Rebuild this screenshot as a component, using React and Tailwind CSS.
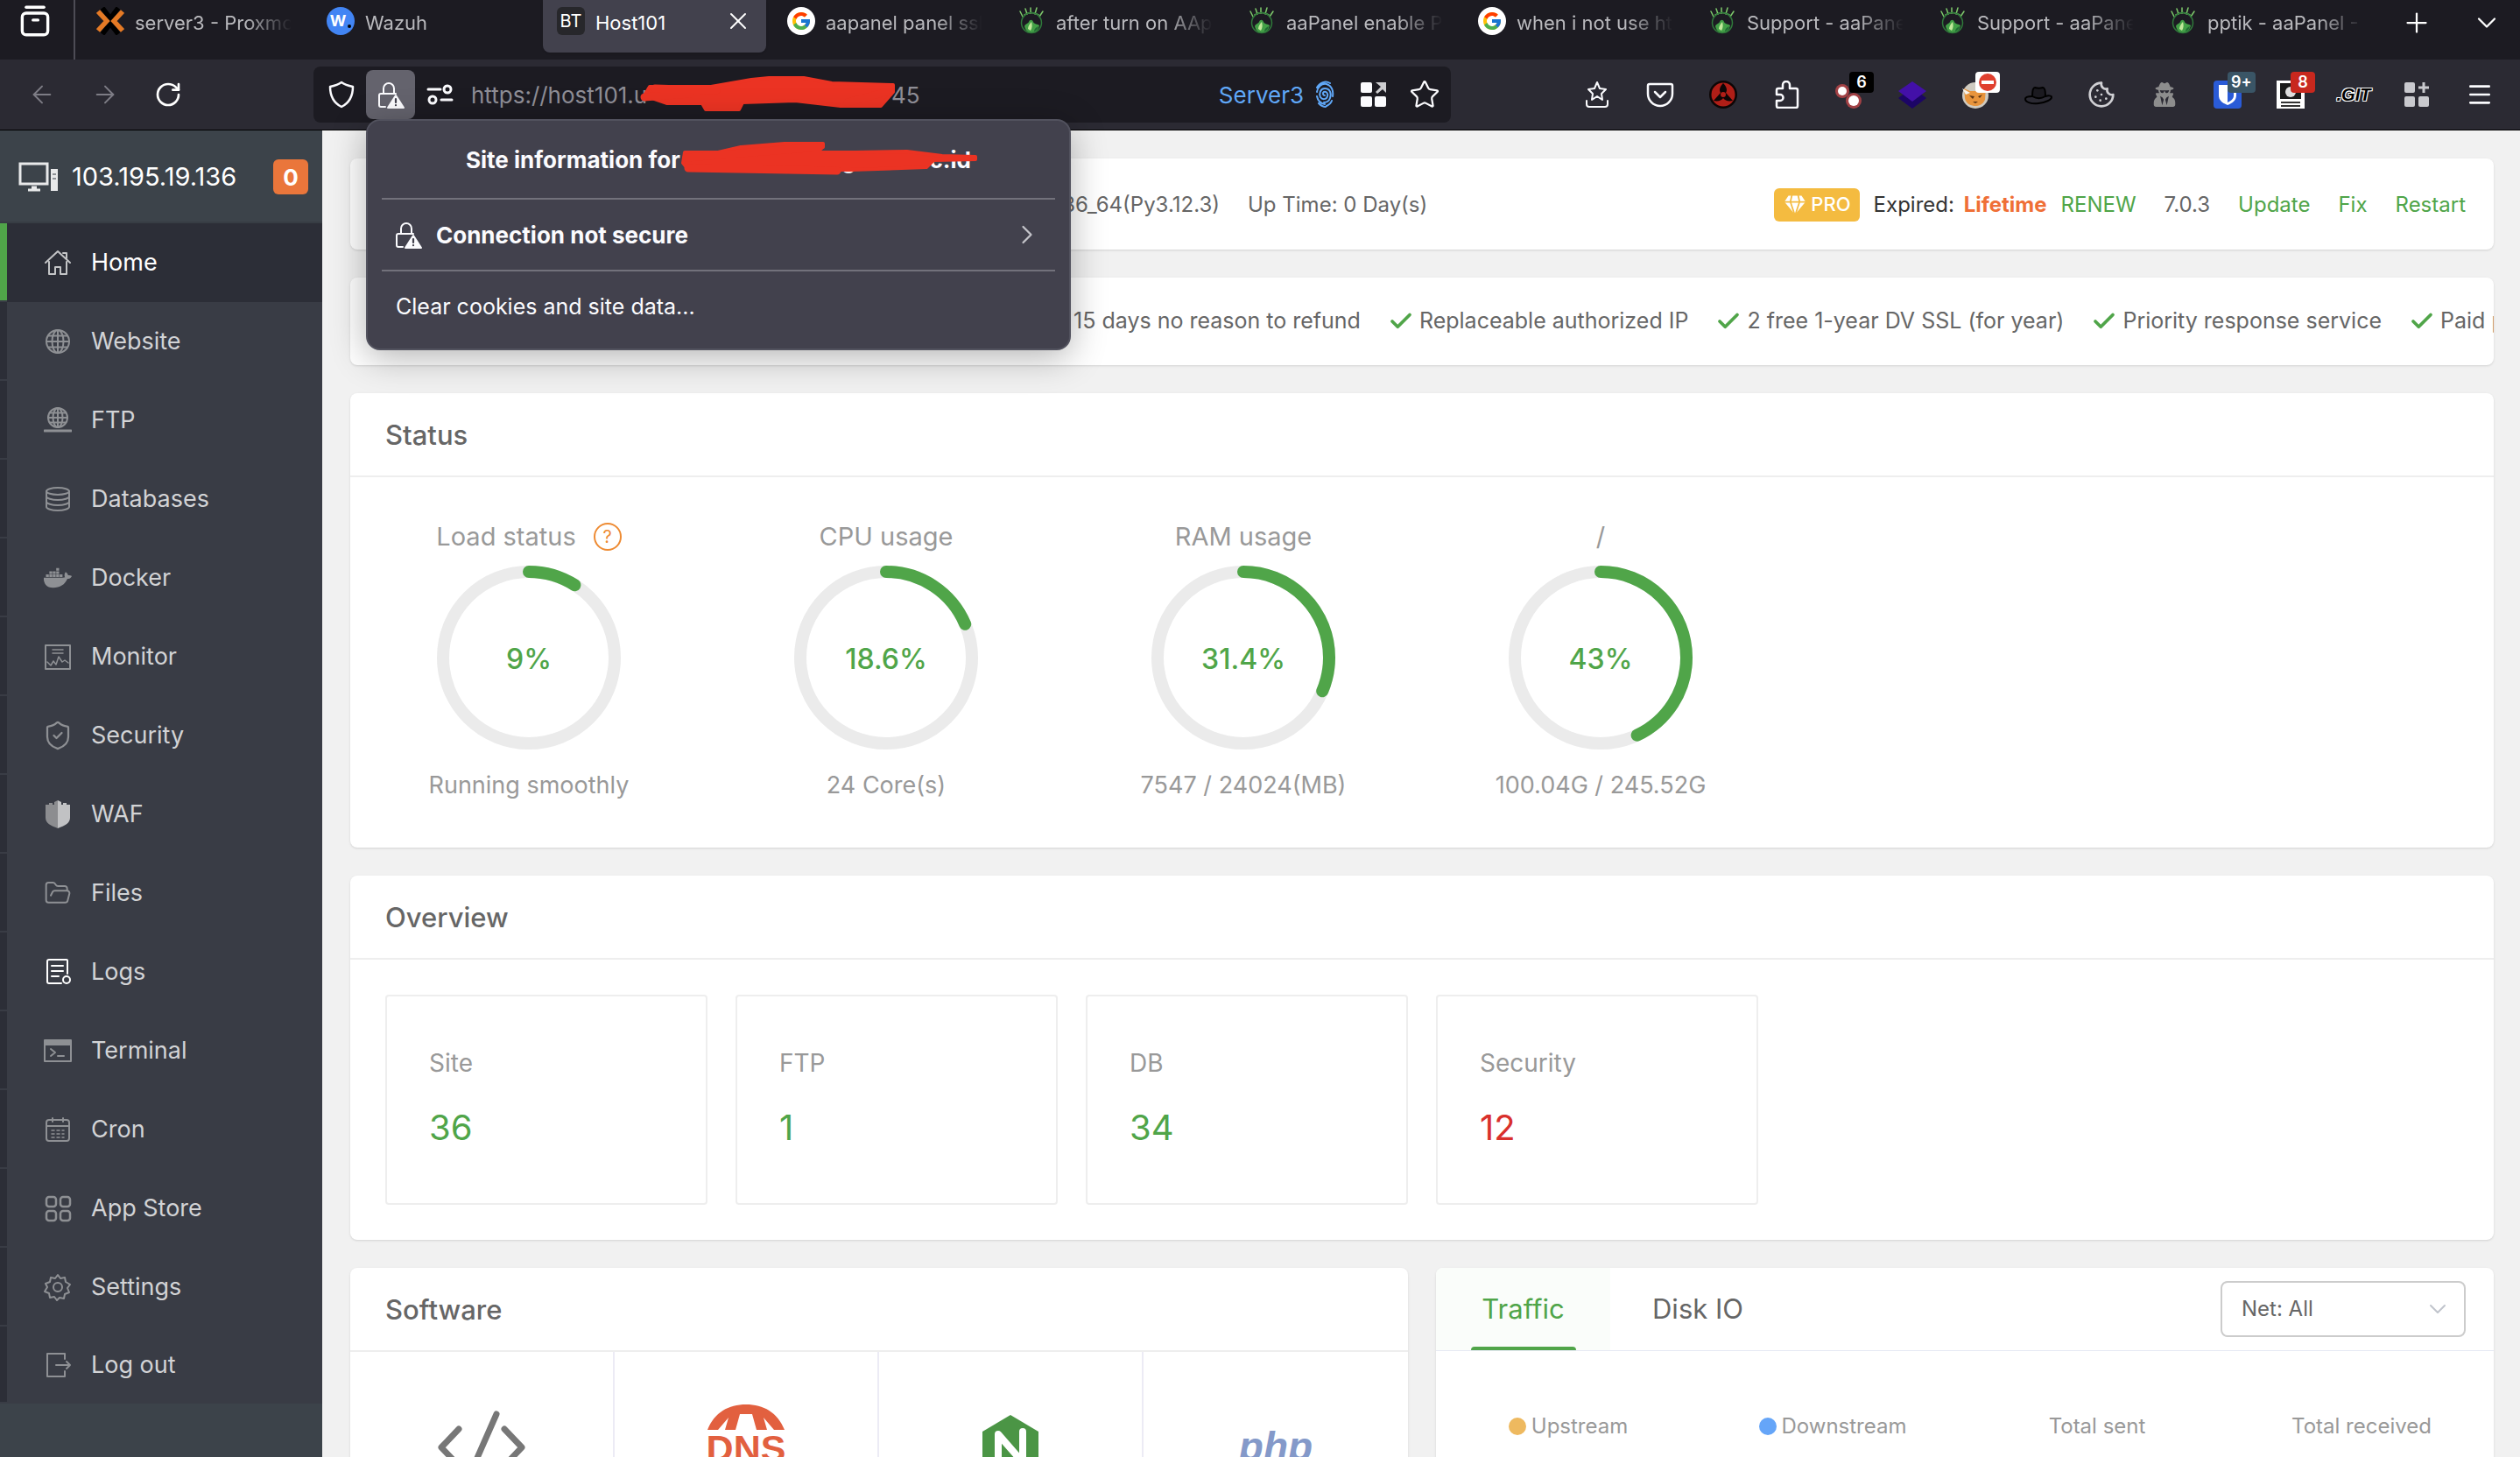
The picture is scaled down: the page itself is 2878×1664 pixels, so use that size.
import { FaDocker, FaUserSecret } from 'react-icons/fa';
import { FcGoogle } from 'react-icons/fc';
import {
  ArrowLeft,
  ArrowRight,
  Check,
  ChevronDown,
  ChevronRight,
  Cookie,
  FolderOpen,
  Menu,
  Plus,
  RotateCw,
  ShieldCheck,
  Star,
  X,
} from 'lucide-react';

/* ---------- small drawings ---------- */

function Svg({ className = 'size-8', width = 2, children, ...rest }) {
  return (
    <svg
      viewBox="0 0 32 32"
      className={`shrink-0 ${className}`}
      fill="none"
      stroke="currentColor"
      strokeWidth={width}
      strokeLinecap="round"
      strokeLinejoin="round"
      aria-hidden="true"
      {...rest}
    >
      {children}
    </svg>
  );
}

function ProxmoxLogo() {
  return (
    <Svg width={5.5} strokeLinecap="butt" strokeLinejoin="miter">
      <path d="M7 1 16 13 25 1M7 31 16 19 25 31" stroke="#000" />
      <path d="M2 5 12 16 2 27M30 5 20 16 30 27" stroke="#e57a25" />
    </Svg>
  );
}

function WazuhLogo() {
  return (
    <span className="flex size-8 shrink-0 items-center justify-center gap-0.5 rounded-full bg-[#4285f4] text-lg font-bold text-white">
      W
      <span className="mt-3 size-1 rounded-full bg-black" />
    </span>
  );
}

function BtLogo() {
  return (
    <span className="flex size-8 shrink-0 items-center justify-center rounded-md bg-[#27272b] text-xl text-white">
      BT
    </span>
  );
}

function GoogleLogo() {
  return (
    <span className="flex size-8 shrink-0 items-center justify-center rounded-full bg-white">
      <FcGoogle className="size-6" />
    </span>
  );
}

function PanelLogo() {
  return (
    <Svg width={1.5}>
      <path d="M6 11 3 5M11 8 9 2M15 7V1M20 8 22 1M25 11 29 5" stroke="#7fca6c" />
      <path d="M8 9c5-3 11-3 16 0" stroke="#7fca6c" />
      <circle cx="16" cy="18" r="11.500" stroke="#2f7a3b" />
      <path d="M8 22c1-3 4-3 5-5 1-3 4-3 5 0 1 3 5 2 7 4-1 5-4 8-9 8s-7-3-8-7z" fill="#43a047" stroke="none" />
      <path d="M12 25c0-3 2-6 4-8 1 3 1 7-1 10z" fill="#c1e89a" stroke="none" />
      <path d="M19 27c1-3 3-4 5-5-1 3-2 5-5 6z" fill="#1f6b32" stroke="none" />
    </Svg>
  );
}

function RecentIcon() {
  return (
    <Svg width={3} className="size-9">
      <path d="M7 2h18" />
      <rect x="3" y="8" width="26" height="22" rx="4" />
      <path d="M14 15h5" />
    </Svg>
  );
}

function LockWarning() {
  return (
    <Svg>
      <path d="M8 15V9a6 6 0 0 1 12 0v6M10 30H5a2 2 0 0 1-2-2V17a2 2 0 0 1 2-2h17" />
      <path d="M22 17 13 31h18z" fill="currentColor" />
      <path d="M22 21v4M22 28v.2" stroke="#42414d" strokeWidth="2.2" />
    </Svg>
  );
}

function Permissions() {
  return (
    <Svg width={3}>
      <path d="M3 10h14M18 22h12" />
      <circle cx="25" cy="10" r="4" />
      <circle cx="8" cy="22" r="4" />
    </Svg>
  );
}

function Swirl() {
  return (
    <Svg className="h-8 w-6 text-[#60a8f8]" viewBox="0 0 24 32">
      <path d="M12 17c-2 0-3-3-1-4 3-1 5 2 4 5-1 4-6 4-8 1-2-4 0-10 5-10 6 0 8 6 6 11-1 3-4 5-7 5" />
      <path d="M3 13C4 7 8 3 14 4c6 2 8 8 7 14M3 8C6 2 13 0 18 3M3 18c1 5 4 8 9 9M20 23c-1 3-4 5-6 6M5 26c3 3 5 4 8 4" />
    </Svg>
  );
}

function OpenTiles() {
  return (
    <Svg fill="currentColor" stroke="none">
      <rect x="1" y="2" width="13" height="12" rx="2" />
      <rect x="1" y="18" width="13" height="12" rx="2" />
      <rect x="17" y="18" width="13" height="12" rx="2" />
      <path d="M18 2h12v12l-4-4-6 5-2-2 6-6z" opacity=".8" />
    </Svg>
  );
}

/* ---------- browser chrome ---------- */

const tabs = [
  { title: 'server3 - Proxmox Virtual', Logo: ProxmoxLogo },
  { title: 'Wazuh', Logo: WazuhLogo },
  { title: 'Host101', Logo: BtLogo, active: true },
  { title: 'aapanel panel ssl not', Logo: GoogleLogo },
  { title: 'after turn on AApanel', Logo: PanelLogo },
  { title: 'aaPanel enable Panel', Logo: PanelLogo },
  { title: 'when i not use https', Logo: GoogleLogo },
  { title: 'Support - aaPanel - ', Logo: PanelLogo },
  { title: 'Support - aaPanel - ', Logo: PanelLogo },
  { title: 'pptik - aaPanel - Ho', Logo: PanelLogo },
];

function TabBar() {
  return (
    <div className="flex h-[68px] bg-[#1c1b22] text-[22px]">
      <button aria-label="Recent tabs" className="flex w-[86px] shrink-0 items-start justify-center border-r-2 border-[#4d4c55] pt-1.5 pr-1 text-white">
        <RecentIcon />
      </button>
      <div className="ml-2 flex min-w-0 flex-1 gap-2" role="tablist">
        {tabs.map(({ title, Logo, active }, i) => (
          <div
            key={i}
            className={`flex h-[60px] w-[255px] shrink-0 items-start gap-3 rounded-b-lg px-4 pt-2
              ${active ? 'bg-[#42414d] text-white shadow' : 'text-[#b9b9bd]'}`}
          >
            <Logo />
            <button
              role="tab"
              aria-selected={!!active}
              className={`min-w-0 flex-1 overflow-hidden text-left leading-9 whitespace-nowrap
                ${active ? '' : '[mask-image:linear-gradient(to_right,black_70%,transparent)]'}`}
            >
              {title}
            </button>
            {active && (
              <button aria-label="Close tab">
                <X className="size-8" strokeWidth={1.5} />
              </button>
            )}
          </div>
        ))}
      </div>
      <div className="flex h-[52px] shrink-0 items-center gap-11 pr-5 text-white">
        <button aria-label="New tab">
          <Plus className="size-9" strokeWidth={1.5} />
        </button>
        <button aria-label="List all tabs">
          <ChevronDown className="size-9" strokeWidth={1.5} />
        </button>
      </div>
    </div>
  );
}

function Scribble({ className, viewBox, d, thin }) {
  return (
    <svg viewBox={viewBox} className={`absolute ${className}`} fill="#eb3323" stroke="#eb3323" strokeWidth="4" strokeLinejoin="round" aria-hidden="true">
      <path d={d} />
      <path d={thin} fill="none" strokeWidth="9" strokeLinecap="round" />
    </svg>
  );
}

function SiteInfo() {
  return (
    <div className="absolute top-full left-0 z-20 w-[805px] rounded-2xl border-2 border-[#52525e] bg-[#42414d] px-4 text-[26px] text-[#fbfbfe] shadow-[0_8px_40px_rgba(0,0,0,0.3)]">
      <div className="relative flex h-[90px] items-center justify-center border-b-2 border-[#72717b] font-bold">
        <span>Site information for h</span>
        <span className="w-[162px]" />
        <span>g</span>
        <span className="w-[84px]" />
        <span>c.id</span>
        <Scribble
          className="top-6 left-[340px] h-12 w-[350px]"
          viewBox="0 0 350 48"
          d="M6 12 44 12 70 6 120 2 164 2 164 6 140 12 200 12 260 11 300 16 338 17 338 20 290 21 282 29 196 32 130 32 80 29 8 29 4 24z"
          thin="M8 18 160 6M10 30 180 33"
        />
      </div>
      <button className="flex h-[82px] w-full items-center gap-4 border-b-2 border-[#72717b] pr-3.5 pl-3.5 text-left font-bold">
        <LockWarning />
        <span className="flex-1">Connection not secure</span>
        <ChevronRight className="size-9 text-[#c4c4ca]" strokeWidth={1.5} />
      </button>
      <button className="flex h-[88px] w-full items-center pb-1.5 pl-4 text-left text-[25px]">
        Clear cookies and site data...
      </button>
    </div>
  );
}

function Badge({ className, children }) {
  return (
    <span className={`absolute -top-2.5 left-4 flex h-6 min-w-7 items-center justify-center rounded px-1 text-lg font-semibold text-white ${className}`}>
      {children}
    </span>
  );
}

const extensions = [
  {
    name: 'Bookmarks',
    icon: (
      <Svg>
        <path d="m16 2 3 7 7 1-5 5 1 7-6-4-6 4 1-7-5-5 7-1z" />
        <path d="M4 23v4a3 3 0 0 0 3 3h18a3 3 0 0 0 3-3v-4" />
      </Svg>
    ),
  },
  {
    name: 'Pocket',
    icon: (
      <Svg width={2.5}>
        <path d="M4 4h24a2 2 0 0 1 2 2v9a14 14 0 0 1-28 0V6a2 2 0 0 1 2-2z" />
        <path d="m10 13 6 6 6-6" />
      </Svg>
    ),
  },
  {
    name: 'Sharingan',
    icon: (
      <Svg stroke="none">
        <circle cx="16" cy="16" r="16" fill="#0d0606" />
        <circle cx="16" cy="16" r="13.500" fill="#b01e17" />
        <path d="M16 3c4 4 5 8 3 11l8 9c-5 1-9 0-11-3-2 3-6 4-11 3l8-9c-2-3-1-7 3-11z" fill="#0d0606" />
        <circle cx="16" cy="16" r="3" fill="#b01e17" />
      </Svg>
    ),
  },
  {
    name: 'Extensions',
    icon: (
      <Svg width={2.5}>
        <path d="M12 9V5a4 4 0 0 1 8 0v4h7a2 2 0 0 1 2 2v18a2 2 0 0 1-2 2H7a2 2 0 0 1-2-2v-6h4a3.500 3.500 0 0 0 0-7H5v-5a2 2 0 0 1 2-2z" />
      </Svg>
    ),
  },
  {
    name: 'Dots',
    badge: <Badge className="bg-black">6</Badge>,
    icon: (
      <Svg stroke="none">
        <circle cx="8" cy="12" r="8" fill="#c0474a" opacity=".8" />
        <circle cx="21" cy="23" r="9" fill="#c0474a" opacity=".8" />
        <circle cx="8" cy="12" r="5" fill="#fff" />
        <circle cx="21" cy="23" r="6" fill="#fff" />
      </Svg>
    ),
  },
  {
    name: 'Layers',
    icon: (
      <Svg stroke="none">
        <path d="M16 8 32 20 16 32 0 20z" fill="#1c0566" />
        <path d="M16 1 32 12 16 24 0 12z" fill="#4310a8" />
      </Svg>
    ),
  },
  {
    name: 'Shiba',
    badge: (
      <Badge className="bg-white">
        <span className="flex size-5 items-center justify-center rounded-full bg-[#e0402f]">
          <span className="h-1 w-3.5 bg-white" />
        </span>
      </Badge>
    ),
    icon: (
      <Svg stroke="none">
        <circle cx="16" cy="17" r="15" fill="#cfcac0" />
        <path d="M3 9l7 3h11l7-4-1 14c-3 6-7 7-11 7S5 27 4 20z" fill="#e8943c" />
        <path d="M9 17l6 1-2 3zM24 16l-5 2 2 2zM13 24h6l-3 2z" fill="#5b3414" />
        <path d="M1 9l9 5-5 2z" fill="#f6f3ec" />
      </Svg>
    ),
  },
  {
    name: 'Hat',
    icon: (
      <Svg stroke="#000">
        <path d="M9 18c0-6 1-10 3-10 3 1 6 1 9 0 2 0 3 5 3 10-5 3-10 3-15 0z" fill="#1b1a20" />
        <path d="M9 18c-4 0-8 1-8 3 0 4 8 6 15 5 8-1 15-4 15-7 0-2-4-2-7-1" />
      </Svg>
    ),
  },
  { name: 'Cookies', icon: <Cookie className="size-9 text-[#d0d0d4]" /> },
  { name: 'Private', icon: <FaUserSecret className="size-7 text-[#8d8d8d]" /> },
  {
    name: 'Vault',
    badge: <Badge className="bg-[#3a5566]">9+</Badge>,
    icon: (
      <Svg stroke="none">
        <rect width="32" height="32" rx="4" fill="#2a5bd7" />
        <path d="M6 5h20v12c0 6-5 9-10 11C11 26 6 23 6 17z" fill="#fff" />
        <path d="M16 8h7v9c0 4-3 6-7 8z" fill="#2a5bd7" />
      </Svg>
    ),
  },
  {
    name: 'Wanted',
    badge: <Badge className="bg-[#c8281e]">8</Badge>,
    icon: (
      <Svg stroke="none">
        <rect width="32" height="32" fill="#fff" />
        <rect x="4" y="3" width="24" height="18" fill="#1a1a1a" />
        <circle cx="16" cy="13" r="6" fill="#ddd" />
        <path d="M5 24h22v2H5zM5 28h22v2H5z" fill="#333" />
      </Svg>
    ),
  },
  {
    name: 'Git',
    icon: (
      <span className="font-['Liberation_Sans'] text-xl font-bold text-black italic [text-shadow:1px_1px_0_white,-1px_-1px_0_white,1px_-1px_0_white,-1px_1px_0_white]">
        .GIT
      </span>
    ),
  },
  {
    name: 'Widgets',
    icon: (
      <Svg fill="currentColor" stroke="none" className="size-8 text-[#c9c9ce]">
        <rect x="2" y="2" width="12" height="12" rx="2" />
        <rect x="2" y="18" width="12" height="12" rx="2" />
        <rect x="18" y="18" width="12" height="12" rx="2" />
        <path d="M22.500 2h3v4.500H30v3h-4.500V14h-3V9.500H18v-3h4.500z" />
      </Svg>
    ),
  },
  { name: 'Menu', icon: <Menu className="size-8" strokeWidth={2} /> },
];

function Toolbar() {
  return (
    <div className="flex h-[81px] items-center border-b border-black bg-[#2b2a33] text-[26px] text-[#fbfbfe]">
      <div className="flex w-[358px] shrink-0 items-center gap-10 pl-8 text-[#7d7c85]">
        <button aria-label="Back">
          <ArrowLeft className="size-8" strokeWidth={1.5} />
        </button>
        <button aria-label="Forward">
          <ArrowRight className="size-8" strokeWidth={1.5} />
        </button>
        <button aria-label="Reload" className="text-white">
          <RotateCw className="size-8" />
        </button>
      </div>
      <div className="flex h-16 w-[1299px] items-center rounded-lg bg-[#1c1b22] pr-3">
        <button aria-label="Tracking protection" className="flex w-[60px] justify-center pr-1 pl-2">
          <Svg width={2.5}>
            <path d="M16 2c4 3 8 4 13 5 0 10-3 18-13 23C6 25 3 17 3 7c5-1 9-2 13-5z" />
          </Svg>
        </button>
        <div className="relative">
          <button aria-label="Site information" className="flex size-14 items-center justify-center rounded-lg bg-[#64636d]">
            <LockWarning />
          </button>
          <SiteInfo />
        </div>
        <button aria-label="Permissions" className="ml-3">
          <Permissions />
        </button>
        <div className="relative ml-5 flex flex-1 text-[#8f8e96]">
          <input aria-label="Address" className="w-[240px] bg-transparent outline-none" defaultValue="https://host101.u" />
          <span className="ml-60">45</span>
          <Scribble
            className="-top-1 left-[190px] h-14 w-[304px]"
            viewBox="0 0 304 56"
            d="M14 14 84 14 130 6 150 4 190 4 222 10 292 12 292 20 278 36 232 36 180 30 120 32 116 40 78 40 74 33 34 33 8 24z"
            thin="M8 26 60 22M20 16 90 18M240 32 284 20"
          />
        </div>
        <span className="text-[#60a8f8]">Server3</span>
        <span className="ml-3">
          <Swirl />
        </span>
        <button aria-label="Open in container" className="ml-7">
          <OpenTiles />
        </button>
        <button aria-label="Bookmark page" className="ml-6">
          <Star className="size-9" strokeWidth={1.5} />
        </button>
      </div>
      <div className="ml-auto flex pr-2.5">
        {extensions.map(({ name, icon, badge }) => (
          <button key={name} aria-label={name} className="flex w-[72px] items-center justify-center">
            <span className="relative flex size-8 items-center justify-center">
              {icon}
              {badge}
            </span>
          </button>
        ))}
      </div>
    </div>
  );
}

/* ---------- sidebar ---------- */

function Globe({ cy = 16, r = 13 }) {
  return (
    <>
      <circle cx="16" cy={cy} r={r} />
      <ellipse cx="16" cy={cy} rx={r / 2} ry={r} />
      <path d={`M16 ${cy - r}v${r * 2}M${16 - r} ${cy}h${r * 2}M${18 - r} ${cy - r / 2}h${r * 2 - 4}M${18 - r} ${cy + r / 2}h${r * 2 - 4}`} />
    </>
  );
}

const nav = [
  {
    label: 'Home',
    active: true,
    icon: (
      <Svg className="size-8 text-[#c3c4c6]">
        <path d="M2 16 16 3l14 13M22 5h4v6M6 15v14h7v-8h6v8h7V15" />
      </Svg>
    ),
  },
  { label: 'Website', icon: <Svg><Globe /></Svg> },
  {
    label: 'FTP',
    icon: (
      <Svg>
        <Globe cy={13} r={11} />
        <path d="M1 28h30M13 28h6" strokeWidth="3" />
      </Svg>
    ),
  },
  {
    label: 'Databases',
    icon: (
      <Svg>
        <ellipse cx="16" cy="7" rx="13" ry="4" />
        <path d="M3 7v18c0 2 6 4 13 4s13-2 13-4V7M3 13c0 2 6 4 13 4s13-2 13-4M3 19c0 2 6 4 13 4s13-2 13-4" />
      </Svg>
    ),
  },
  { label: 'Docker', icon: <FaDocker className="size-8" /> },
  {
    label: 'Monitor',
    icon: (
      <Svg>
        <rect x="2" y="3" width="28" height="27" />
        <path d="M10 8h12M10 12h12M4 22l4 4 3-5 3 4 3-9 4 6 3-2 4 3" strokeWidth="1.5" />
      </Svg>
    ),
  },
  { label: 'Security', icon: <ShieldCheck className="size-9" strokeWidth={1.5} /> },
  {
    label: 'WAF',
    icon: (
      <Svg stroke="none">
        <path d="M2 5h4V3h4v2h2V2l4-2v32C8 29 2 26 2 20z" fill="#8c8d90" />
        <path d="M30 5h-4V3h-4v2h-2V2l-4-2v32c8-3 14-6 14-12z" fill="#c1c2c4" />
      </Svg>
    ),
  },
  { label: 'Files', icon: <FolderOpen className="size-8" strokeWidth={1.5} /> },
  {
    label: 'Logs',
    icon: (
      <Svg className="size-8 text-white">
        <path d="M20 29H6a2 2 0 0 1-2-2V4a2 2 0 0 1 2-2h20a1 1 0 0 1 1 1v15M9 9h13M9 15h13M9 21h8" />
        <circle cx="26" cy="25" r="4" />
      </Svg>
    ),
  },
  {
    label: 'Terminal',
    icon: (
      <Svg>
        <rect x="1" y="4" width="30" height="24" />
        <path d="M1 5h30v4H1z" fill="currentColor" />
        <path d="m8 14 5 4-5 4M16 22h7" />
      </Svg>
    ),
  },
  {
    label: 'Cron',
    icon: (
      <Svg>
        <rect x="3" y="5" width="26" height="24" rx="3" />
        <path d="M3 12h26M10 3v4M22 3v4" />
        <path d="M9 17h14M9 21h14M9 25h14" strokeWidth="1.5" strokeDasharray="3 3" />
      </Svg>
    ),
  },
  {
    label: 'App Store',
    icon: (
      <Svg width={2.5}>
        <rect x="3" y="3" width="11" height="11" rx="3" />
        <rect x="19" y="3" width="11" height="11" rx="3" />
        <rect x="3" y="19" width="11" height="11" rx="3" />
        <rect x="19" y="19" width="11" height="11" rx="3" />
      </Svg>
    ),
  },
  {
    label: 'Settings',
    icon: (
      <Svg>
        <path d="m16 2 3 4 5-1 1 5 5 3-3 4 2 5-5 2-1 5-5-1-3 3-3-4-5 1-1-5-5-2 3-5-2-4 5-2 1-5 5 1z" />
        <circle cx="16" cy="16" r="5" />
      </Svg>
    ),
  },
  {
    label: 'Log out',
    icon: (
      <Svg>
        <path d="M24 9V3H4v26h20v-6M14 16h16M26 12l4 4-4 4" />
      </Svg>
    ),
  },
];

function Sidebar() {
  return (
    <aside className="w-[368px] shrink-0 bg-[#3c434a]">
      <div className="flex h-[106px] items-center border-b-2 border-[#373d44] pt-0.5 pr-4 pl-5 text-white">
        <svg viewBox="0 0 48 34" className="h-[34px] w-12" fill="none" stroke="#e8e9ea" strokeWidth="3" aria-hidden="true">
          <rect x="3" y="2" width="31" height="23" />
          <path d="M12 32h14M16 29h6" />
          <rect x="38" y="8" width="8" height="25" fill="#e8e9ea" stroke="none" />
          <path d="M40 14h4M40 19h4" stroke="#8d9196" strokeWidth="2" />
        </svg>
        <span className="ml-3.5 flex-1 text-[29px]">103.195.19.136</span>
        <span className="flex size-10 items-center justify-center rounded-md bg-[#ea763b] text-[26px] font-bold">0</span>
      </div>
      <nav>
        {nav.map(({ label, icon, active }) => (
          <a
            key={label}
            href={`#${label}`}
            className={`flex h-[90px] items-stretch text-[27px] last:h-[88px]
              ${active ? 'bg-[#2c2e37] text-white' : 'bg-[#393c45] text-[#d2d3d5]'}`}
          >
            <span className={`w-2 border-b-2 border-[#393c45] ${active ? 'bg-[#50a549]' : 'bg-[#2c2e37]'}`} />
            <span className="ml-10 flex w-9 items-center justify-center text-[#8e9094]">{icon}</span>
            <span className="ml-5 self-center">{label}</span>
          </a>
        ))}
      </nav>
    </aside>
  );
}

/* ---------- dashboard ---------- */

function Card({ title, className = '', children }) {
  return (
    <section className={`rounded-lg bg-white shadow-sm ${className}`}>
      {title && (
        <h2 className="flex h-24 items-center border-b-2 border-[#eeeeee] px-10 pt-0.5 text-[31px] font-medium text-[#666666]">
          {title}
        </h2>
      )}
      {children}
    </section>
  );
}

function InfoBar() {
  return (
    <Card className="flex h-[104px] items-center gap-8 px-8 pt-0.5 text-2xl text-[#666666]">
      <span className="w-[961px] text-right">x86_64(Py3.12.3)</span>
      <span className="flex-1">Up Time: 0 Day(s)</span>
      <div className="flex items-center gap-4">
        <span className="flex h-[38px] items-center gap-1 rounded-md bg-[#f4bb40] px-2.5 text-[22px] font-medium text-white">
          <Svg className="size-7" width={2} fill="white" stroke="#f4bb40">
            <path d="M7 3h18l6 9-15 18L1 12z" />
            <path d="M1 12h30M12 3l-2 9 6 18 6-18-2-9" fill="none" />
          </Svg>
          PRO
        </span>
        <span className="text-[#333333]">
          Expired: <b className="ml-1 font-bold text-[#ef6f36]">Lifetime</b>
        </span>
        <a href="#renew" className="text-[#50a549]">RENEW</a>
      </div>
      <span>7.0.3</span>
      <a href="#update" className="text-[#50a549]">Update</a>
      <a href="#fix" className="text-[#50a549]">Fix</a>
      <a href="#restart" className="text-[#50a549]">Restart</a>
    </Card>
  );
}

const perks = [
  '15 days no reason to refund',
  'Replaceable authorized IP',
  '2 free 1-year DV SSL (for year)',
  'Priority response service',
  'Paid plugins',
];

function PerksBar() {
  return (
    <Card className="h-[100px] overflow-hidden">
      <ul className="flex h-full items-center gap-[31px] pl-[790px] text-[25px] whitespace-nowrap text-[#666666]">
        {perks.map((perk) => (
          <li key={perk} className="flex items-center gap-1.5">
            <Check className="size-[30px] text-[#50a549]" strokeWidth={3} />
            {perk}
          </li>
        ))}
      </ul>
    </Card>
  );
}

const gauges = [
  { label: 'Load status', value: 9, note: 'Running smoothly', help: true },
  { label: 'CPU usage', value: 18.6, note: '24 Core(s)' },
  { label: 'RAM usage', value: 31.4, note: '7547 / 24024(MB)' },
  { label: '/', value: 43, note: '100.04G / 245.52G' },
];

function Gauge({ label, value, note, help }) {
  return (
    <div className="flex w-[408px] flex-col items-center text-[29px] leading-8 text-[#999999]">
      <div className="flex items-center gap-5">
        {label}
        {help && (
          <button aria-label="About load" className="flex size-8 items-center justify-center rounded-full border-2 border-[#ee8b33] text-xl text-[#ee8b33]">
            ?
          </button>
        )}
      </div>
      <div className="mt-[17px] grid size-[210px] place-items-center">
        <svg viewBox="0 0 210 210" className="col-start-1 row-start-1 -rotate-90" fill="none" strokeWidth="14" aria-hidden="true">
          <circle cx="105" cy="105" r="98" stroke="#ebebeb" />
          <circle cx="105" cy="105" r="98" stroke="#50a549" strokeLinecap="round" pathLength="100" strokeDasharray={`${value} 100`} />
        </svg>
        <span className="col-start-1 row-start-1 pt-1 text-[32px] font-medium text-[#50a549]">{value}%</span>
      </div>
      <p className="mt-[25px] text-[27px]">{note}</p>
    </div>
  );
}

const counts = [
  { label: 'Site', value: 36 },
  { label: 'FTP', value: 1 },
  { label: 'DB', value: 34 },
  { label: 'Security', value: 12, alert: true },
];

function Software() {
  return (
    <Card title="Software">
      <div className="grid h-[300px] grid-cols-4 divide-x-2 divide-[#ecebf5]">
        <div className="flex justify-center pt-[66px]">
          <svg viewBox="0 0 100 84" className="h-[84px] w-[100px]" fill="none" stroke="#777777" strokeWidth="7" strokeLinecap="round" strokeLinejoin="round" aria-hidden="true">
            <path d="M24 22 4 43l20 21M76 22l20 21-20 21M67 5 34 80" />
          </svg>
        </div>
        <div className="flex justify-center pt-[60px]">
          <svg viewBox="0 0 96 96" className="size-24" aria-hidden="true">
            <path d="M4 29C12 9 28 0 48 0s36 9 44 29H80L68 15l4 14H60L55 11H41l-5 18H24l4-14-12 14z" fill="#e2603f" />
            <text x="48" y="65" textAnchor="middle" className="fill-[#e2603f] font-['Liberation_Sans'] text-[43px] font-bold">DNS</text>
            <path d="M4 74h88c-8 14-24 22-44 22S12 88 4 74z" fill="#e2603f" />
          </svg>
        </div>
        <div className="flex justify-center pt-[72px]">
          <svg viewBox="0 0 66 76" className="h-[76px] w-[66px]" aria-hidden="true">
            <path d="M33 0 65 19v38L33 76 1 57V19z" fill="#4b9545" />
            <path d="M19 57V22l28 32V19" fill="none" stroke="#fff" strokeWidth="8" strokeLinecap="round" strokeLinejoin="round" />
          </svg>
        </div>
        <div className="flex justify-center pt-[78px] font-['Liberation_Sans'] text-[46px] leading-[60px] font-bold text-[#8499c9] italic">
          php
        </div>
      </div>
    </Card>
  );
}

function Traffic() {
  return (
    <Card>
      <div className="flex h-[95px] border-b border-[#e6e9f3] text-[31px]">
        <button className="relative flex w-[199px] items-center justify-center rounded-tl-lg bg-[#fafdfa] text-[#50a549]">
          Traffic
          <span className="absolute bottom-0 left-10 h-1 w-[120px] rounded-t bg-[#50a549]" />
        </button>
        <button className="px-12 text-[#666666]">Disk IO</button>
        <div className="relative mr-8 ml-auto self-center">
          <select
            aria-label="Network interface"
            className="h-16 w-[280px] appearance-none rounded-lg border-2 border-[#cccccc] bg-white pl-[22px] text-2xl text-[#666666]"
          >
            <option>Net: All</option>
          </select>
          <ChevronDown className="pointer-events-none absolute top-4 right-4 size-8 text-[#c0c4cc]" strokeWidth={1.5} />
        </div>
      </div>
      <div className="grid grid-cols-4 pt-[70px] text-2xl leading-8 text-[#999999]">
        <div className="flex items-center justify-center gap-1.5">
          <span className="size-5 rounded-full bg-[#eeb95f]" />
          Upstream
        </div>
        <div className="flex items-center justify-center gap-1.5">
          <span className="size-5 rounded-full bg-[#65a5f8]" />
          Downstream
        </div>
        <div className="text-center">Total sent</div>
        <div className="text-center">Total received</div>
      </div>
    </Card>
  );
}

export default function App() {
  return (
    <div className="flex h-screen flex-col overflow-hidden bg-[#f1f1f1] font-['Inter',sans-serif]">
      <header className="relative z-10 shrink-0">
        <TabBar />
        <Toolbar />
      </header>
      <div className="flex min-h-0 flex-1">
        <Sidebar />
        <main className="flex min-w-0 flex-1 flex-col gap-8 overflow-hidden py-8 pr-[30px] pl-8 *:shrink-0">
          <InfoBar />
          <PerksBar />
          <Card title="Status">
            <div className="flex pt-[52px] pb-[55px]">
              {gauges.map((gauge) => (
                <Gauge key={gauge.label} {...gauge} />
              ))}
            </div>
          </Card>
          <Card title="Overview">
            <div className="flex gap-8 p-10">
              {counts.map(({ label, value, alert }) => (
                <div key={label} className="h-60 w-[368px] rounded border-2 border-[#eeeeee] px-12 pt-[58px]">
                  <p className="text-[28px] leading-9 text-[#999999]">{label}</p>
                  <a href={`#${label}`} className={`mt-8 block text-[40px] leading-[48px] ${alert ? 'text-[#d9302c]' : 'text-[#50a549]'}`}>
                    {value}
                  </a>
                </div>
              ))}
            </div>
          </Card>
          <div className="grid grid-cols-2 gap-8">
            <Software />
            <Traffic />
          </div>
        </main>
      </div>
    </div>
  );
}
